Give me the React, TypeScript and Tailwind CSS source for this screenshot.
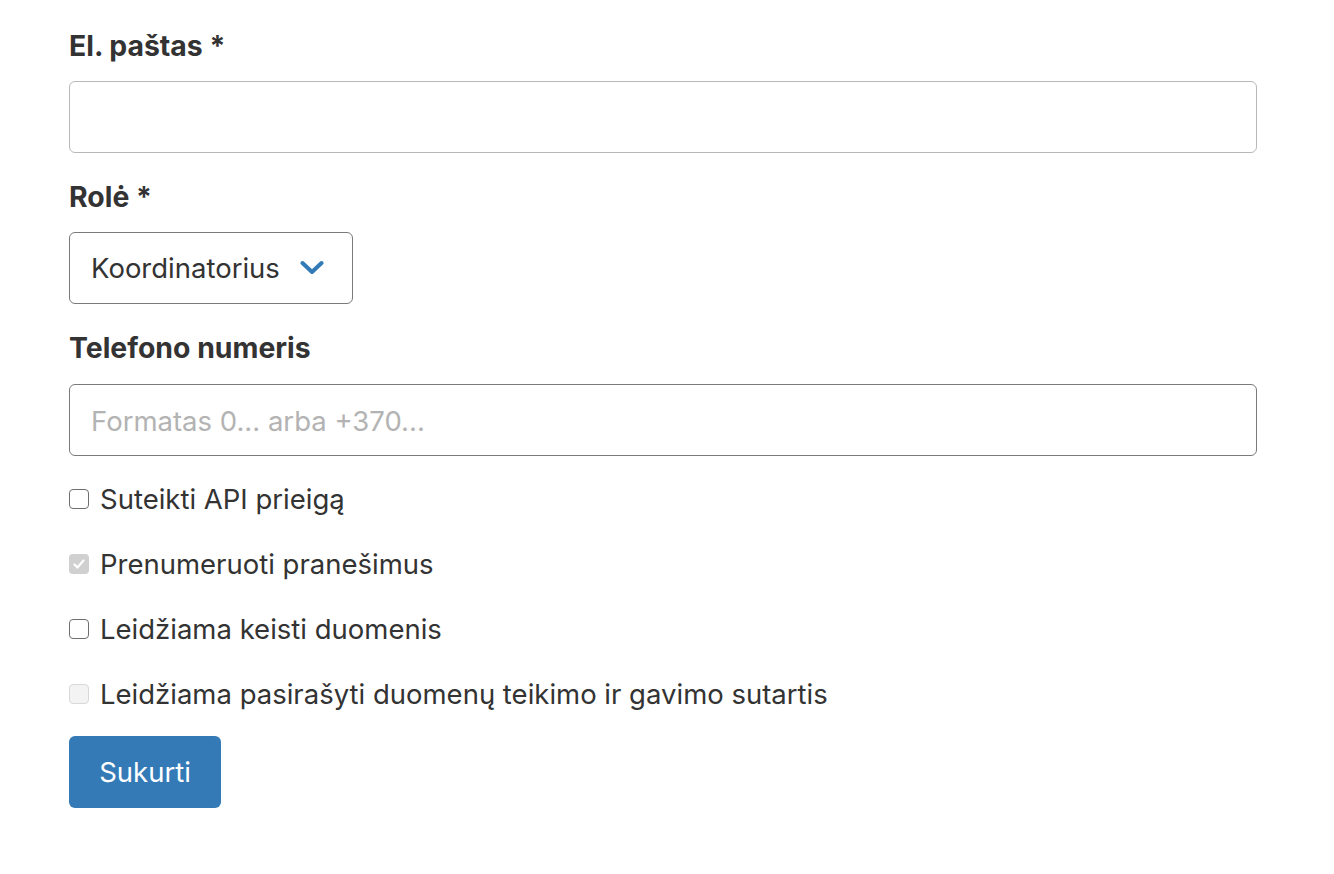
import React from "react";

const font = { fontFamily: "Inter, 'Noto Sans', sans-serif" };

function Box({ state }: { state: "empty" | "checkedDisabled" | "disabled" }) {
  if (state === "checkedDisabled") {
    return (
      <span className="flex h-[20px] w-[20px] shrink-0 items-center justify-center rounded-[4px] bg-[#d0d0d0]">
        <svg width="14" height="14" viewBox="0 0 14 14" fill="none">
          <path d="M2.5 7.5 L5.5 10.5 L11.5 3.5" stroke="#ffffff" strokeWidth="2.2" strokeLinecap="round" strokeLinejoin="round" />
        </svg>
      </span>
    );
  }
  if (state === "disabled") {
    return <span className="h-[20px] w-[20px] shrink-0 rounded-[4px] border border-[#d8d8d8] bg-[#f3f3f3]" />;
  }
  return <span className="h-[20px] w-[20px] shrink-0 rounded-[4px] border-[1.5px] border-[#6f6f6f] bg-white" />;
}

function Check({ label, state }: { label: string; state: "empty" | "checkedDisabled" | "disabled" }) {
  return (
    <label className="flex h-[40px] items-center gap-[11px] text-[27.5px] leading-[40px] text-[#333333]">
      <span className="flex">
        <Box state={state} />
      </span>
      <span>{label}</span>
    </label>
  );
}

export default function App() {
  return (
    <div className="min-h-[874px] w-full bg-white pl-[69px] pt-[26px]" style={font}>
      <div className="flex w-[1188px] flex-col">
        <div className="mb-[15px] h-[40px] text-[28.4px] font-bold leading-[40px] text-[#333333]">El. paštas *</div>
        <div className="h-[72px] w-full rounded-[6px] border border-[#b8b8b8] bg-white" />

        <div className="mb-[15px] mt-[24px] h-[40px] text-[28.4px] font-bold leading-[40px] text-[#333333]">Rolė *</div>
        <div className="flex h-[72px] w-[284px] items-center justify-between rounded-[6px] border border-[#7a7a7a] bg-white pl-[21px] pr-[28px] pt-[2px] text-[27.5px] text-[#333333]">
          <span>Koordinatorius</span>
          <svg width="24" height="16" viewBox="0 0 24 16" fill="none" className="-mt-[2px]">
            <path d="M2.5 3 L12 12 L21.5 3" stroke="#337ab7" strokeWidth="4" strokeLinecap="round" strokeLinejoin="round" />
          </svg>
        </div>

        <div className="mb-[16px] mt-[24px] h-[40px] text-[28.4px] font-bold leading-[40px] text-[#333333]">Telefono numeris</div>
        <div className="flex h-[72px] w-full items-center rounded-[6px] border border-[#7a7a7a] bg-white pl-[21px] pt-[3px] text-[27.5px] text-[#b3b3b3]">
          Formatas 0... arba +370...
        </div>

        <div className="mt-[23px] flex flex-col gap-[25px]">
          <Check label="Suteikti API prieigą" state="empty" />
          <Check label="Prenumeruoti pranešimus" state="checkedDisabled" />
          <Check label="Leidžiama keisti duomenis" state="empty" />
          <Check label="Leidžiama pasirašyti duomenų teikimo ir gavimo sutartis" state="disabled" />
        </div>

        <div className="mt-[22px]">
          <button className="flex h-[72px] w-[152px] items-center justify-center rounded-[6px] bg-[#337ab7] pt-[2px] text-[27.5px] text-white">
            Sukurti
          </button>
        </div>
      </div>
    </div>
  );
}
